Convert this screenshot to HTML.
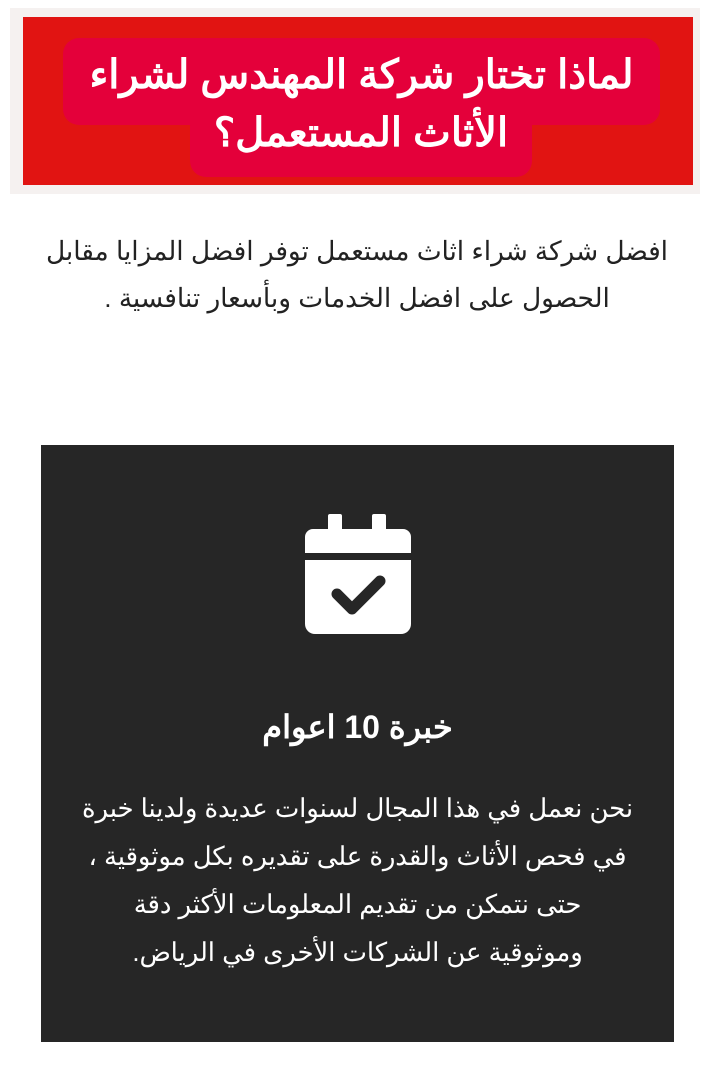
<!DOCTYPE html>
<html><head><meta charset="utf-8"><style>
body{margin:0;width:704px;height:1077px;background:#fff;position:relative;font-family:"Liberation Sans","Noto Sans CJK SC",sans-serif;overflow:hidden}
.a{position:absolute}
.t{color:#fff;font-weight:bold;font-size:40px;text-align:center;direction:rtl;white-space:nowrap}
</style></head><body>
<div class="a" style="left:10px;top:8px;width:690px;height:186px;background:#f5f1f0"></div>
<div class="a" style="left:23px;top:17px;width:670px;height:168px;background:#e11412"></div>
<div class="a" style="left:63px;top:38px;width:597px;height:87px;background:#e4003a;border-radius:16px"></div>
<div class="a" style="left:190px;top:110px;width:342px;height:67px;background:#e4003a;border-radius:16px"></div>
<div class="a t" style="left:63px;top:50px;width:597px;line-height:50px">لماذا تختار شركة المهندس لشراء</div>
<div class="a t" style="left:190px;top:108px;width:342px;line-height:50px">الأثاث المستعمل؟</div>
<div class="a" style="left:0;top:228px;width:714px;direction:rtl;text-align:center;font-size:26.3px;line-height:47px;color:#222;white-space:nowrap">افضل شركة شراء اثاث مستعمل توفر افضل المزايا مقابل<br>الحصول على افضل الخدمات وبأسعار تنافسية .</div>
<div class="a" style="left:41px;top:445px;width:633px;height:597px;background:#262626"></div>
<svg class="a" style="left:305px;top:514px" width="106" height="121" viewBox="0 0 106 121">
<rect x="23" y="0" width="14" height="22" rx="2" fill="#fff"/>
<rect x="67" y="0" width="14" height="22" rx="2" fill="#fff"/>
<path d="M8 15H98a8 8 0 0 1 8 8V39H0V23a8 8 0 0 1 8-8z" fill="#fff"/>
<path d="M0 46H106V110a10 10 0 0 1-10 10H10A10 10 0 0 1 0 110z" fill="#fff"/>
<path d="M32 80l15 15 28-28" stroke="#262626" stroke-width="11" fill="none" stroke-linecap="round" stroke-linejoin="round"/>
</svg>
<div class="a" style="left:41px;top:702px;width:633px;text-align:center;color:#fff;font-weight:bold;font-size:32px;direction:rtl;line-height:50px">خبرة 10 اعوام</div>
<div class="a" style="left:41px;top:785px;width:633px;text-align:center;color:#fff;font-size:25.8px;direction:rtl;line-height:48px;white-space:nowrap">نحن نعمل في هذا المجال لسنوات عديدة ولدينا خبرة<br>في فحص الأثاث والقدرة على تقديره بكل موثوقية ،<br>حتى نتمكن من تقديم المعلومات الأكثر دقة<br>وموثوقية عن الشركات الأخرى في الرياض.</div>
</body></html>
